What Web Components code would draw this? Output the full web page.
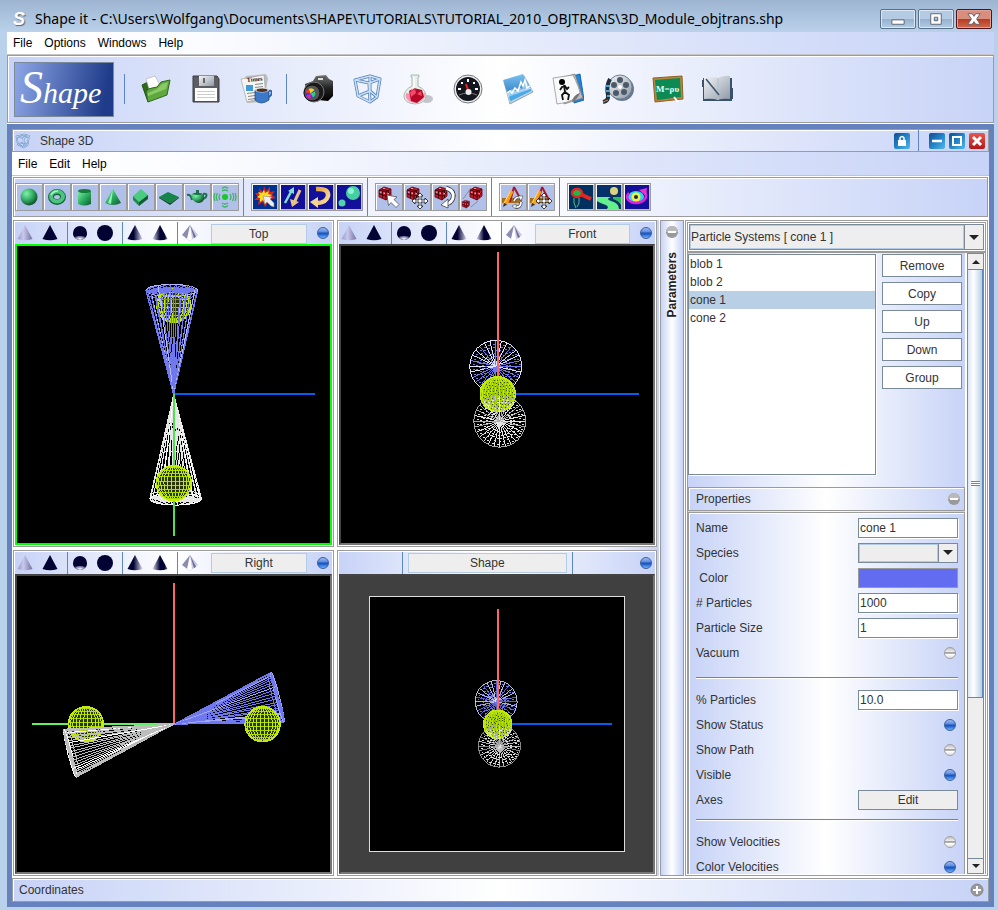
<!DOCTYPE html>
<html lang="en">
<head>
<meta charset="utf-8">
<title>Shape it</title>
<style>
  html, body { height: 100%; margin: 0; }
  body {
    --line: #9b9b9b;
    --edge: #c7d3f7;
    --steel: #7a8a99;
    --blue: #6581be;
    --sheen: linear-gradient(90deg, #c7d3f7, #fff 50%, #c7d3f7);
    --fade: linear-gradient(90deg, #fff, #fbfcff 20%, #c7d3f7);
    font: 12px/16px "Liberation Sans", Arial, sans-serif;
    color: #333;
    background: #b9d1ea;
  }
</style>
</head>
<body>
<app-window></app-window>

<script>
// -Small helper: every element clones its own template into an open root
function define(name, html, setup) {
  const template = document.createElement('template');
  template.innerHTML = html;
  customElements.define(name, class extends HTMLElement {
    constructor() {
      super();
      this.attachShadow({ mode: 'open' });
      this.shadowRoot.appendChild(template.content.cloneNode(true));
    }
    connectedCallback() {
      if (setup && !this.ready) setup(this, this.shadowRoot);
      this.ready = true;
    }
  });
}

const DEFS = `
  <linearGradient id="green" x2="1" y2="1"><stop stop-color="#7df0a5"/><stop offset=".5" stop-color="#2fae62"/><stop offset="1" stop-color="#0c5a2c"/></linearGradient>
  <radialGradient id="ball" cx=".35" cy=".3" r=".75"><stop stop-color="#7ff2a8"/><stop offset=".5" stop-color="#35b067"/><stop offset="1" stop-color="#0c4a26"/></radialGradient>
  <linearGradient id="metal" y2="1" x2="1"><stop stop-color="#f4f6f8"/><stop offset="1" stop-color="#8e99a6"/></linearGradient>
  <linearGradient id="dark" x2="0" y2="1"><stop stop-color="#777"/><stop offset=".5" stop-color="#222"/><stop offset="1" stop-color="#000"/></linearGradient>
  <linearGradient id="sky" x2="0" y2="1"><stop stop-color="#7cc0ee"/><stop offset="1" stop-color="#1c6fc0"/></linearGradient>
  <linearGradient id="gold" x2="1" y2="1"><stop stop-color="#e2a23c"/><stop offset="1" stop-color="#fbe0a0"/></linearGradient>`;

const CUBE = `<path fill="#c31828" stroke="#5a0610" stroke-width=".8" d="M2 5l5-3 7 2v7l-5 4-7-3z"/><path fill="none" stroke="#46040c" d="M2 5l7 2 5-3M9 7v8M2 8.500l7 3 5-4M4.500 4l7 2v7M5.500 6v7"/><path fill="#ec98a0" d="M3 6.500h1.500v1.500H3zM6.500 7.500H8V9H6.500zM10.500 8H12v1.500h-1.500zM6 3h2v1H6z"/>`;
const POINTER = `<path fill="#fff" stroke="#444" stroke-width=".7" d="M10 10l10 2-3 2.500 5 5-3 3-5-5-2.500 3z"/>`;
const CROSS = `<path fill="#fff" stroke="#111" stroke-width=".8" d="M15 8l3 3h-2v4h4v-2l3 3-3 3v-2h-4v4h2l-3 3-3-3h2v-4h-4v2l-3-3 3-3v2h4v-4h-2z"/>`;
const TOOLS = `<path fill="#a96d20" d="M1 13h20v5H1z"/><path d="M13 2l-4 15M13 2l7 13" stroke="#a8182c" stroke-width="2"/><path d="M11 6L4 20" stroke="#f6a11b" stroke-width="3.500"/><path d="M9.500 6L3 18" stroke="#ffe07a"/><path fill="#333" d="M2 22l1-4 3 1.500z"/>`;

// -Drawn on a 32px box (main bar), 24px box (object bar) or 16px box (views)
const ICONS = {
  open: [32, `<path fill="#2d6a1c" stroke="#25551a" d="M2 12l6-3 2 2 5-2v5l-7 15z"/><path fill="#fff" stroke="#aaa" stroke-width=".6" d="M6 6l9-3 5 9-10 7z"/><path fill="#5fa83e" stroke="#2d6a1c" d="M6 19q2-4 6-4l5-1 4-5 9-2-3 15-19 7z"/><path fill="#a6df80" opacity=".6" d="M8 20l9-4 5-5 6-2-2 7-18 7z"/>`],
  save: [32, `<path fill="#5d5d62" stroke="#3d3d42" d="M3 3h24l2 3v23H3z"/><path fill="url(#metal)" d="M9 3h15v10H9z"/><path fill="#666" d="M13 5h2v5h-2z"/><path fill="#fff" d="M5 15h22v13H5z"/><path stroke="#ccc" d="M7 18.500h18M7 21.500h18M7 24.500h18"/>`],
  news: [32, `<path fill="#bdbdbd" d="M3 8l3-5 20-2 2 4-4 24-17 1z"/><path fill="#f5f5f5" stroke="#999" stroke-width=".6" d="M1 6l23-4 2 22-19 5z"/><text x="7" y="9" font-family="Liberation Serif" font-weight="bold" font-size="6" fill="#111" transform="rotate(-6 8 8)">Times</text><path fill="#3f9ad5" d="M6 12h7v6H6z"/><path stroke="#888" d="M15 11.500l8-1M15 14.500l8-1M7 20.500l8-1M8 23.500l7-1M8 26.500l7-1"/><path fill="#3c78c8" stroke="#173e7d" stroke-width=".7" d="M15 17v10q6 6 14 0V17z"/><path fill="none" stroke="#2e66b4" stroke-width="2" d="M29 18q4-1 2 4l-3 3"/><ellipse cx="22" cy="17" rx="7" ry="2.500" fill="#ddd"/><ellipse cx="22" cy="17.300" rx="5.500" ry="1.700" fill="#51301a"/>`],
  camera: [32, `<path fill="url(#dark)" d="M3 11l8-3 3-5 10-1 3 4 4 2v15l-5 5-20-2z"/><path fill="#555" d="M15 4h8l2 4H13z"/><path fill="#ddd" d="M16 5h5v2h-5z"/><circle cx="12" cy="19" r="10" fill="#1b1b1b" stroke="#777"/><circle cx="10" cy="20" r="8" fill="#555" stroke="#111"/><circle cx="8.500" cy="20.500" r="5" fill="#3a3ad8"/><path fill="#e11cb8" d="M8.500 20.500L4 23a5 5 0 0 0 5 2.500z"/><path fill="#27d07a" d="M8.500 20.500l4.500-2a5 5 0 0 1-2 6z"/><path fill="#f3d21c" d="M8.500 20.500L6.500 16a5 5 0 0 1 6 1z"/><path fill="#e63c2d" d="M8.500 20.500l-5-1a5 5 0 0 1 3-3.500z"/>`],
  cube: [32, `<g fill="none" stroke="#5580b5" stroke-width="3" stroke-linejoin="round"><path d="M3 7l15-4 10 3-3 18-7 5-12-6z"/><path d="M3 7l14 3 11-4M17 10l1 19M18 3v15L6 23M18 18l7 6"/></g><g fill="none" stroke="#c9e0f8" stroke-width="1.500" stroke-linejoin="round"><path d="M3 7l15-4 10 3-3 18-7 5-12-6z"/><path d="M3 7l14 3 11-4M17 10l1 19M18 3v15L6 23M18 18l7 6"/></g>`],
  flask: [32, `<ellipse cx="25" cy="26" rx="6" ry="4" fill="#777" opacity=".4"/><path fill="#e5efeb" stroke="#a9bab2" d="M9 2h8v2h-1v9q8 4 8 10 0 7-11 8Q2 30 2 23q0-6 8-10V4H9z"/><path fill="#ff8fae" d="M4 20q9 2 19 0 1 8-10 10Q2 28 4 20z"/><path fill="#b80828" d="M7 18l5-3 8 2 2 7-7 6-6-2z"/><path fill="#f24e6c" d="M8 19l5-3 1 4-5 4zM15 21l4-3 1 5z"/><path fill="#fff" opacity=".7" d="M11 4h2v11l-4 3q2-3 2-5z"/>`],
  gauge: [32, `<circle cx="16" cy="16" r="14" fill="#eee" stroke="#777"/><circle cx="16" cy="16" r="12" fill="#14161f"/><path fill="#fff" d="M15 6h2v3h-2zM6 15h3v2H6zM23 15h3v2h-3zM9 9h2v2H9zM21 9h2v2h-2z"/><path fill="none" stroke="#777" d="M7 22q9-4 18 0"/><path d="M14 11l3 9" stroke="#e3281e" stroke-width="2"/><circle cx="16.500" cy="19" r="3" fill="#eee"/>`],
  wave: [32, `<path fill="#b9c8d4" stroke="#778ea1" stroke-width=".7" d="M2 9l20-6 9 16-23 12z"/><path fill="url(#sky)" d="M1 7l20-6 9 16-22 10z"/><path fill="#4aa8e6" stroke="#d7efff" stroke-width=".6" d="M6 21l23-6 1 3-22 11z"/><path fill="#d8f0ff" opacity=".5" d="M5 19l5-3 3 2 4-4 3 2 4-8 4 6 1 2-23 8z"/><path fill="none" stroke="#fff" stroke-width="1.500" d="M5 20l3-2 2 2 3-5 3 3 3-9 2 4 2-6 2 8 3-2"/>`],
  runner: [32, `<path fill="#2185dd" stroke="#1665b5" d="M21 3l7-2 4 26-10 3z"/><path fill="#bbb" stroke="#777" stroke-width=".7" d="M8 5l15-4 8 24-19 6z"/><path fill="#f9f9f9" stroke="#888" stroke-width=".7" d="M1 5l20-3q6 12 7 18-5 9-23 11z"/><circle cx="10" cy="9" r="3"/><path fill="none" stroke="#111" stroke-width="1.800" d="M12 12l1 7 4 3-1 5M13 19l-3 3 1 5M8 17l2-3 3-1 2 3 2-2"/><path fill="#777" d="M28 20q-7 2-8 9 5-2 8-9z"/>`],
  reel: [32, `<circle cx="20" cy="16" r="12" fill="#68798f"/><circle cx="18" cy="14" r="12" fill="url(#metal)" stroke="#6f7f92"/><g fill="#4b5968"><circle cx="18" cy="7" r="3"/><circle cx="24" cy="12" r="3"/><circle cx="22" cy="19" r="3"/><circle cx="14" cy="20" r="3"/><circle cx="12" cy="12" r="3"/></g><circle cx="18" cy="14" r="2" fill="#fff"/><path fill="none" stroke="#222e3b" stroke-width="4" d="M8 6Q4 13 6 22q1 6-5 7"/><path stroke="#4aa9e0" stroke-width="2" d="M4 13h4M4 18h4M5 23h3"/><path stroke="#e08a4a" d="M1 29l5-2"/>`],
  board: [32, `<path fill="#b8863b" stroke="#8f6224" d="M1 5l29-2 1 23-28 3z"/><path fill="#0b8a55" d="M3 7l25-2 1 19-24 3z"/><text x="4" y="19" font-family="Liberation Serif" font-size="9" font-weight="bold" fill="#e8fff2">M=ρυ</text><path d="M22 24l4 5" stroke="#fff" stroke-width="2"/>`],
  book: [32, `<path fill="#39516b" d="M1 5h29v23H1zM0 7h3v7H0zM28 15h3v11h-3z"/><path fill="url(#metal)" d="M2 4q9-1 14 1 6-3 12-2v23q-7-1-12 1-6-2-14-1z"/><path stroke="#b4c0cc" d="M16 5v22"/><path d="M4 6l13 16" stroke="#3d5470" stroke-width="1.500"/>`],

  sphere: [24, `<circle cx="12" cy="12" r="8.500" fill="url(#ball)"/>`],
  torus: [24, `<ellipse cx="12" cy="12" rx="6" ry="5" fill="none" stroke="#16643a" stroke-width="6"/><ellipse cx="12" cy="11.500" rx="6" ry="5" fill="none" stroke="#4cc47e" stroke-width="4"/><path d="M6 10q2-4 7-4" fill="none" stroke="#a5f5c4" stroke-width="1.500"/>`],
  cylinder: [24, `<path fill="url(#green)" d="M5 6v13q6 3 13 0V6z"/><ellipse cx="11.500" cy="6" rx="6.500" ry="2" fill="#177b3e"/>`],
  cone: [24, `<path fill="url(#green)" d="M12 4l8 14q-8 4-16 0z"/><path fill="#8ff5b5" d="M12 4L7 18l3 1z"/>`],
  box: [24, `<path fill="#49cc80" d="M4 11l8-7 7 6-9 7z"/><path fill="#22894c" d="M4 11l6 6v4l-6-6z"/><path fill="#0f5e31" d="M10 17l9-7v4l-9 7z"/>`],
  plane: [24, `<path fill="#15854a" d="M2 12l9-5 11 5-9 6z"/><path fill="#0b5129" d="M2 12l11 6 9-6v1l-9 7-11-7z"/>`],
  teapot: [24, `<path fill="none" stroke="#1f7048" stroke-width="2" d="M2 10q4-1 5 5M18 9q5-1 3 3l-4 3"/><path fill="url(#ball)" d="M6 10q6-5 13 0 1 7-5 8-6 0-8-8z"/><path fill="#1f7048" d="M11 5h3v3h-3zM7 9q5-3 11 0-5 2-11 0z"/>`],
  signal: [24, `<circle cx="12" cy="12" r="3" fill="#16c82c"/><g fill="none" stroke="#3fb366" stroke-width="1.300"><path d="M7 9q-2 3 0 6M4.500 8q-2.500 4 0 8M2 8q-2 4 0 8M17 9q2 3 0 6M19.500 8q2.500 4 0 8M22 8q2 4 0 8M9 6q3-2 6 0M9 3.500q3-3 6 0M9 18q3 2 6 0M9 20.500q3 3 6 0"/></g>`],
  pick: [24, `<path fill="#003090" d="M0 0h24v24H0z"/><path fill="#e32118" d="M11 1l2 5 4-4v5l5-1-3 4 4 3-5 1 2 5-5-2-3 5-2-5-5 3 1-5-5 0 4-3-3-4 5 0-1-5 4 4z"/><path fill="#ffdf23" d="M11 5l1 3 4-2-1 3 4 1-3 2 2 4-4-1-2 4-2-4-3 2 0-4-3-1 3-2-2-3 4 1z"/><path fill="#eee" stroke="#888" stroke-width=".6" d="M10 11l9 1-2 2 4 4 0 4-3-1-4-4-2 2z"/>`],
  move: [24, `<path fill="#12109a" d="M0 0h24v24H0z"/><path stroke="#7fe0cf" stroke-width="2.500" d="M4 18L11 5"/><path fill="#7fe0cf" d="M13 2v7l-6-3z"/><path stroke="#e6c488" stroke-width="3" d="M19 5l-6 13"/><path fill="#e6c488" d="M9 14l9 3-7 5z"/>`],
  rotate: [24, `<path fill="#12109a" d="M0 0h24v24H0z"/><path fill="none" stroke="url(#gold)" stroke-width="4.500" d="M7 4q13-1 12 7-2 7-11 7"/><path fill="#f6d78e" d="M9 12v11l-8-6z"/>`],
  scale: [24, `<path fill="#12109a" d="M0 0h24v24H0z"/><circle cx="16" cy="8" r="7" fill="#46cfa0"/><circle cx="14" cy="6" r="3" fill="#8ff3d0"/><circle cx="5" cy="18" r="3.500" fill="#4fd3a7"/>`],
  opick: [24, CUBE + POINTER],
  omove: [24, CUBE + CROSS],
  orot: [24, CUBE + `<path fill="none" stroke="#333" stroke-width="4.500" d="M13 3q9 3 7 10-1 4-6 6"/><path fill="none" stroke="#fff" stroke-width="3" d="M13 3q9 3 7 10-1 4-6 6"/><path fill="#fff" stroke="#333" stroke-width=".7" d="M15 14v9l-7-3z"/>`],
  oscale: [24, `<g transform="translate(7 0)">${CUBE}</g><g transform="translate(0 14) scale(.6)">${CUBE}</g><path stroke="#777" stroke-width=".7" d="M2 14L10 3M10 22l7-6"/>`],
  trot: [24, TOOLS + `<path fill="none" stroke="#333" stroke-width="3" d="M13 16q2-5 6-3M20 17q0 6-6 5"/><path fill="none" stroke="#fff" stroke-width="1.800" d="M13 16q2-5 6-3M20 17q0 6-6 5"/><path fill="#fff" stroke="#333" stroke-width=".5" d="M17 11h5l-2 5zM15 19v5l-4-3z"/>`],
  tmove: [24, TOOLS + CROSS],
  zoom: [24, `<path fill="#003060" d="M0 0h24v24H0z"/><path d="M11 9l11 5" stroke="#e32720" stroke-width="4"/><ellipse cx="8" cy="8" rx="5" ry="4" fill="#20b84c" stroke="#e32720" stroke-width="2.500"/><path d="M5 13v5l2 5M10 13v5l-2 4" stroke="#6fe08a" fill="none" stroke-width=".8"/>`],
  scene: [24, `<path fill="#06306c" d="M0 0h24v24H0z"/><circle cx="17" cy="6" r="4" fill="#dcd27c"/><path fill="#64f08c" d="M0 12h14q-6 2 0 4 8 2 8 8H10q3-3-4-5-5-2-6-3z"/><path fill="#2dbd58" d="M16 12h8v8q-2-4-8-6z"/>`],
  eye: [24, `<path fill="#12109a" d="M0 0h24v24H0z"/><ellipse cx="11" cy="12" rx="8" ry="6" fill="#28d8f0"/><circle cx="11" cy="12" r="4.500" fill="#f6f13a"/><circle cx="11" cy="12" r="2" fill="#225"/><path fill="none" stroke="#e21ee2" stroke-width="2.500" d="M4 8q-5 5 2 9 8 3 14-3 2-3 0-7"/><path fill="#ee30c8" d="M14 5l8-2-1 8z"/>`],

  coneLight: [16, `<defs><linearGradient id="a"><stop stop-color="#9a98cf"/><stop offset=".4" stop-color="#c9c8ea"/><stop offset="1" stop-color="#74729f"/></linearGradient></defs><path fill="url(#a)" d="M8 0l7.500 14q-7.500 2.500-15 0z"/>`],
  coneDark: [16, `<path fill="#020233" d="M8 0l7.500 14q-7.500 2.500-15 0z"/>`],
  ballHalf: [16, `<defs><radialGradient id="a" cy=".85"><stop stop-color="#fff"/><stop offset=".7" stop-color="#77759f"/><stop offset="1" stop-color="#020233"/></radialGradient></defs><circle cx="8" cy="8" r="7" fill="#020233"/><path fill="url(#a)" d="M1 8h14q-1 7-7 7T1 8z"/>`],
  ballDark: [16, `<circle cx="8" cy="8" r="8" fill="#020233"/>`],
  coneRight: [16, `<defs><linearGradient id="a"><stop offset=".4" stop-color="#020233"/><stop offset="1" stop-color="#d5d4ea"/></linearGradient></defs><path fill="url(#a)" d="M8 0l7.500 14q-7.500 2.500-15 0z"/>`],
  coneLeft: [16, `<defs><linearGradient id="a"><stop stop-color="#d5d4ea"/><stop offset=".5" stop-color="#020233"/><stop offset=".8" stop-color="#020233"/><stop offset="1" stop-color="#77759f"/></linearGradient></defs><path fill="url(#a)" d="M8 0l7.500 14q-7.500 2.500-15 0z"/>`],
  diamond: [16, `<path fill="#8c8bb0" d="M8 0L0 10l8 6z"/><path fill="#c8c8e2" d="M8 0l8 10-8 6z"/><path fill="#fff" d="M8 0L5 14l3 2 2-2z"/><path fill="#6c6b96" d="M8 0l4 13 2-1z"/>`],

  plus: [16, `<circle cx="8" cy="8" r="6" fill="#999" stroke="#888"/><path d="M8 4v8M4 8h8" stroke="#fff" stroke-width="2"/>`],
  minus: [16, `<circle cx="8" cy="8" r="6" fill="#999"/><path fill="#b9b9b9" d="M2 8a6 6 0 0 1 12 0z"/><path d="M4 8h8" stroke="#fff" stroke-width="2"/>`],
  lock: [16, `<path fill="#fff" d="M4 7h8v6H4z"/><path d="M6 7V5q2-3 4 0v2" fill="none" stroke="#fff" stroke-width="1.500"/>`],
  min: [16, `<path d="M3 8h10" stroke="#fff" stroke-width="2.500"/>`],
  max: [16, `<path d="M4 4h8v8H4z" fill="none" stroke="#fff" stroke-width="2"/>`],
  close: [16, `<path d="M4 4l8 8M12 4l-8 8" stroke="#fff" stroke-width="3"/>`],
  winMin: [16, `<path d="M1 9h14v5H1z" fill="#fff" stroke="#555a66"/>`],
  winMax: [16, `<path d="M2 2h12v12H2zM6 6v4h4V6z" fill="#fff" fill-rule="evenodd" stroke="#555a66"/>`],
  winClose: [16, `<path d="M1 2h5l2 3 2-3h5l-4 6 4 6h-5l-2-3-2 3H1l4-6z" fill="#fff" stroke="#555a66"/>`]
};

define('shape-icon', `
  <style>
    :host { display: block; line-height: 0; }
    svg { width: 100%; height: 100%; display: block; }
  </style>`, (host, root) => {
  const [size, body] = ICONS[host.getAttribute('name')];
  root.innerHTML += `<svg viewBox="0 0 ${size} ${size}" aria-hidden="true"><defs>${DEFS}</defs>${body}</svg>`;
});

// -kind: main | tool | view | frame | win
define('icon-button', `
  <style>
    :host { display: block; flex: none; }
    button { display: block; box-sizing: border-box; margin: 0; padding: 0; border: 0; background: none; }
    shape-icon { width: 16px; height: 16px; margin: auto; }
    .main shape-icon { width: 32px; height: 32px; }
    .tool { width: 28px; height: 28px; padding: 1px; border: 1px solid var(--line); box-shadow: inset 1px 1px #fff; background: #b1c0e8; }
    .tool shape-icon { width: 24px; height: 24px; }
    .frame { width: 16px; height: 16px; border-radius: 2px; background: linear-gradient(135deg, #0e4c92, #2383c8 50%, #53b8ec); }
    .frame.red { background: linear-gradient(#e8584f, #b01818); }
    .win { width: 36px; height: 20px; border: 1px solid #5a6f88; border-radius: 2px; box-shadow: inset 0 0 0 1px #dbe7f5; background: linear-gradient(#b5cbe3 50%, #95b0cd 50%, #b4cde6); }
    .win.red { border-color: #4c1420; box-shadow: inset 0 0 0 1px #e3a196; background: linear-gradient(#d98d7c 50%, #b73a22 50%, #cf6a4c); }
    .win shape-icon { width: 14px; height: 14px; }
  </style>
  <button type="button"></button>`, (host, root) => {
  const button = root.querySelector('button');
  button.className = host.getAttribute('kind');
  button.setAttribute('aria-label', host.getAttribute('name'));
  button.innerHTML = `<shape-icon name="${host.getAttribute('name')}"></shape-icon>`;
});

const icons = (kind, names) => names.split(' ').map(n =>
  n === '|' ? '<i class="sep"></i>' : `<icon-button kind="${kind}" name="${n}"></icon-button>`).join('');

define('menu-bar', `
  <style>
    :host { display: flex; align-items: center; gap: 12px; height: 23px; padding: 0 6px; color: #000; background: var(--fade); border-bottom: 1px solid #c4c4c4; }
    ::slotted(button) { font: inherit; color: inherit; border: 0; padding: 0; background: none; }
  </style>
  <slot></slot>`);

// -Round lamp that is a tick box underneath
const LAMP = `
    input.lamp {
      appearance: none; flex: none; box-sizing: border-box; width: 12px; height: 12px; margin: 0; border-radius: 50%;
      border: 1px solid #a0a0a0; background: linear-gradient(#c4c4c4, #efefef 40%, #a4a4a4 45%, #b4b4b4 55%, #fff 65%, #ddd);
    }
    input.lamp:checked { border-color: #3b5f9c; background: linear-gradient(#9dbdf0, #5b8be0 40%, #1c4fb4 50%, #2766d0 65%, #6fb5ff); }`;

// ---- Wire scenes ----
const line = (x1, y1, x2, y2, c, w = 1) =>
  `<path d="M${x1.toFixed(1)} ${y1.toFixed(1)}L${x2.toFixed(1)} ${y2.toFixed(1)}" stroke="${c}" stroke-width="${w}"/>`;

// -Cone from the origin to a tilted base ellipse
function coneWire(cx, cy, rx, ry, tilt, dim, lit) {
  let out = '';
  const rings = [1, 0.97, 0.52, 0.28];
  const at = (a, s) => {
    const x = rx * Math.cos(a), y = ry * Math.sin(a);
    return [(cx + x * Math.cos(tilt) - y * Math.sin(tilt)) * s, (cy + x * Math.sin(tilt) + y * Math.cos(tilt)) * s];
  };
  for (let i = 0; i < 26; i++) {
    const a = i * Math.PI / 13 + 0.05;
    const p = at(a, 1);
    out += line(0, 0, p[0], p[1], i % 7 === 3 ? lit : dim);
    out += line(cx, cy, p[0], p[1], dim);
    rings.forEach(s => {
      const m = at(a, s), n = at(a + 0.24, s);
      if (s > 0.9 || i % 2) out += line(m[0], m[1], n[0], n[1], s === 1 ? lit : dim);
    });
  }
  return out;
}

// -Cone seen along its axis
function wheelWire(cx, cy, r, rim, dot) {
  let out = '';
  for (let i = 0; i < 28; i++) {
    const a = i * Math.PI / 14, c = Math.cos(a), s = Math.sin(a);
    out += line(cx, cy, cx + r * c, cy + r * s, s > 0.3 || i % 3 === 0 ? dot : rim);
    for (let k = 0; k < 5; k++) {
      const d = r * (0.4 + 0.12 * k), b = a + 0.06 * (k % 3 + 1);
      out += `<rect x="${(cx + d * Math.cos(b)).toFixed(1)}" y="${(cy + d * Math.sin(b)).toFixed(1)}" width="2" height="1" fill="${dot}" stroke="none"/>`;
    }
  }
  return out + `<circle cx="${cx}" cy="${cy}" r="${r}" stroke="${rim}"/>`;
}

function ballWire(cx, cy, r, dense) {
  const n = 13;
  let out = `<circle cx="${cx}" cy="${cy}" r="${r}" fill="${dense ? '#96c400' : '#2a3600'}" stroke="#c4f000" stroke-width="1.500"/>`;
  for (let i = 1; i < n; i++) {
    const a = Math.PI * i / n - Math.PI / 2, d = r * Math.sin(a), w = r * Math.cos(a);
    out += line(cx - w, cy + d, cx + w, cy + d, '#a8d800');
    if (d > 0) out += `<ellipse cx="${cx}" cy="${cy}" rx="${d.toFixed(1)}" ry="${r}" stroke="#c2ea10"/>`;
  }
  if (dense) {
    for (let i = 0; i < 90; i++) {
      const a = i * 2.4, d = r * 0.9 * Math.sqrt(i / 90);
      out += `<rect x="${(cx + d * Math.cos(a)).toFixed(0)}" y="${(cy + d * Math.sin(a)).toFixed(0)}" width="1" height="1" fill="#3c5200" stroke="none"/>`;
    }
  }
  return out;
}

const BLUE = '#7078ee', RED = '#ff6464', GREEN = '#64f064', AXIS = '#0a5cf0';
const front = `
  ${line(0, 0, 141, 0, AXIS, 2)}
  ${wheelWire(-2, -28, 26, '#dfe2ff', BLUE)}
  ${line(0, -142, 0, 0, RED, 2)}
  ${ballWire(0, 0, 17.5, true)}
  ${wheelWire(2, 27, 26, '#aaa', '#e4e4e4')}`;
const SCENES = {
  top: `${line(0, 0, 141, 0, AXIS, 2)}${ballWire(0, -89, 17)}${coneWire(-2, -104, 26, 6, 0, BLUE, '#b4b8ff')}
    ${coneWire(2, 105, 26, 6, 0, '#e6e6e6', '#fff')}${line(0, 0, 0, 142, '#50e050', 2)}${ballWire(0, 89, 17.5)}`,
  front,
  right: `${line(0, 0, 0, -141, RED, 2)}${line(0, 0, -142, 0, GREEN, 2)}${ballWire(-88, 0, 17.5)}
    ${coneWire(104, -27, 2, 26, -0.25, BLUE, '#a0a8ff')}${coneWire(-104, 29, 2, 25, -0.25, '#bdbdbd', '#fff')}${ballWire(89, 0, 17.5)}`,
  shape: `<rect x="-128" y="-128" width="255" height="255" fill="#000" stroke="#ddd"/><g transform="scale(.81)">${front}</g>`
};

define('wire-scene', `
  <style>
    :host { display: block; min-height: 0; overflow: hidden; background: #000; border: 2px solid #444; border-right-color: #777; border-bottom-color: #777; }
    :host([active]) { border-color: #0f0; }
    :host([view=shape]) { background: #404040; }
    svg { display: block; width: 100%; height: 100%; }
  </style>`, (host, root) => {
  root.innerHTML += `<svg viewBox="-157 -148 313 296" fill="none" shape-rendering="crispEdges" aria-hidden="true">${SCENES[host.getAttribute('view')]}</svg>`;
});

define('view-panel', `
  <style>
    :host { display: flex; flex-direction: column; min-height: 0; box-sizing: border-box; padding: 1px; border: 1px solid var(--line); background: #fff; }
    header { display: flex; align-items: center; height: 22px; flex: none; background: var(--sheen); }
    .group { display: flex; align-items: center; align-self: stretch; gap: 9px; padding: 0 8px 0 4px; margin-left: 1px; }
    .group + .group { border-left: 1px solid #5f86c4; }
    .group:first-child { padding-left: 1px; }
    .title { font: inherit; color: inherit; flex: 1; height: 20px; padding: 0; margin: 1px 10px 0 5px; border: 1px solid #b3cce4; background: #eee; }
    .wide { align-self: stretch; flex: 1; display: flex; align-items: center; border: solid #5f86c4; border-width: 0 1px; margin: 0 67px 0 63px; }
    .wide .title { margin: 1px 5px 0; }
    ${LAMP}
    .lamp { margin-right: 3px !important; }
    wire-scene { flex: 1; }
  </style>
  <header></header>`, (host, root) => {
  const view = host.getAttribute('view');
  const title = `<button type="button" class="title">${host.getAttribute('label')}</button>`;
  const header = root.querySelector('header');
  header.innerHTML = (view === 'shape'
    ? `<div class="wide">${title}</div>`
    : `<div class="group">${icons('view', 'coneLight coneDark')}</div>
       <div class="group">${icons('view', 'ballHalf ballDark')}</div>
       <div class="group">${icons('view', 'coneRight coneLeft')}</div>
       <div class="group">${icons('view', 'diamond')}</div>${title}`) +
    `<input class="lamp" type="checkbox" checked aria-label="Show view">`;
  const active = host.hasAttribute('active') ? 'active' : '';
  root.appendChild(document.createRange().createContextualFragment(`<wire-scene view="${view}" ${active}></wire-scene>`));
});

// ---- Parameter column ----
define('combo-box', `
  <style>
    :host { display: flex; box-sizing: border-box; height: 26px; border: 1px solid var(--steel); background: #eee; }
    select { appearance: none; flex: 1; min-width: 0; font: inherit; color: inherit; margin: 0; padding: 0; border: 1px solid #b3cce4; background: #eee; border-radius: 0; }
    span { flex: none; width: 18px; display: grid; place-items: center; border-left: 1px solid var(--steel); }
    span::after { content: ''; border: solid transparent; border-width: 5px 5px 0; border-top-color: #222; }
  </style>
  <select><option></option></select><span></span>`, (host, root) => {
  root.querySelector('option').textContent = host.getAttribute('value');
  root.querySelector('select').setAttribute('aria-label', host.getAttribute('label'));
});

define('field-row', `
  <style>
    :host { display: flex; align-items: center; justify-content: space-between; height: 25px; }
    .box { box-sizing: border-box; width: 100px; height: 20px; margin: 0; font: inherit; color: inherit; border-radius: 0; border: 1px solid var(--steel); }
    input.text { padding: 0 1px; background: #fff; box-shadow: 1px 1px #fff; }
    button.box { padding: 0; background: #eee; }
    button.swatch { background: #626cf0; border-color: #999; }
    combo-box { width: 100px; height: 20px; }
    ${LAMP}
    .lamp { margin-right: 2px !important; }
  </style>
  <label for="field"><slot></slot></label>`, (host, root) => {
  const value = host.getAttribute('value') || '';
  const controls = {
    text: `<input class="box text" id="field" type="text" value="${value}">`,
    combo: `<combo-box label="Species" value=""></combo-box>`,
    color: `<button class="box swatch" id="field" type="button" aria-label="Color"></button>`,
    on: `<input class="lamp" id="field" type="checkbox" checked>`,
    off: `<input class="lamp" id="field" type="checkbox">`,
    button: `<button class="box" id="field" type="button">${value}</button>`
  };
  root.appendChild(document.createRange().createContextualFragment(controls[host.getAttribute('type')]));
});

define('property-list', `
  <style>
    :host { display: flex; flex-direction: column; flex: 1; min-height: 0; }
    header { display: flex; align-items: center; justify-content: space-between; flex: none; height: 22px; padding: 0 2px 0 7px; border: 1px solid var(--line); box-shadow: inset 1px 1px #fff; background: var(--sheen); }
    .rows { flex: 1; min-height: 0; overflow: hidden; margin-top: 1px; padding: 2px 6px 0 7px; border: 1px solid var(--line); border-bottom: 0; box-shadow: inset 1px 1px #fff; background: var(--sheen); }
    hr { margin: 12px 0 8px; border: 0; border-top: 1px solid #5f86c4; border-bottom: 1px solid #fff; }
    hr.near { margin-top: 7px; }
  </style>
  <header><span>Properties</span><icon-button kind="view" name="minus"></icon-button></header>
  <div class="rows">
    <field-row type="text" value="cone 1">Name</field-row>
    <field-row type="combo">Species</field-row>
    <field-row type="color">&nbsp;Color</field-row>
    <field-row type="text" value="1000"># Particles</field-row>
    <field-row type="text" value="1">Particle Size</field-row>
    <field-row type="off">Vacuum</field-row>
    <hr>
    <field-row type="text" value="10.0">% Particles</field-row>
    <field-row type="on">Show Status</field-row>
    <field-row type="off">Show Path</field-row>
    <field-row type="on">Visible</field-row>
    <field-row type="button" value="Edit">Axes</field-row>
    <hr class="near">
    <field-row type="off">Show Velocities</field-row>
    <field-row type="on">Color Velocities</field-row>
  </div>`);

define('scroll-rail', `
  <style>
    :host { display: flex; flex-direction: column; box-sizing: border-box; width: 17px; border: 1px solid var(--steel); background: #eee; }
    button { flex: none; display: grid; place-items: center; height: 15px; padding: 0; border: 0; background: #eee; }
    button::after { content: ''; border: solid transparent; border-width: 0 4px 4px; border-bottom-color: #222; }
    button.down { border-top: 1px solid var(--steel); }
    button.down::after { border-width: 4px 4px 0; border-top-color: #222; }
    .thumb { flex: 427; display: grid; place-items: center; border: 1px solid #5f86c4; border-left: 0; background: linear-gradient(90deg, #dbe7f4, #fff 40%, #b8cfe5); }
    .thumb::after { content: ''; width: 9px; height: 5px; background: repeating-linear-gradient(#5f86c4 0 1px, #fff 1px 2px); }
    .track { flex: 160; }
  </style>
  <button type="button" class="up" aria-label="Scroll up"></button>
  <div class="thumb"></div><div class="track"></div>
  <button type="button" class="down" aria-label="Scroll down"></button>`);

define('side-panel', `
  <style>
    :host { display: flex; flex-direction: column; min-height: 0; box-sizing: border-box; padding: 1px 1px 1px; border: 1px solid var(--line); background: #fff; }
    .pick, .pane { border: 1px solid var(--line); padding: 1px; }
    .pane { flex: 1; min-height: 0; display: flex; gap: 2px; background: #fff; border-bottom: 0; padding: 0 1px 0 0; }
    .main { flex: 1; min-width: 0; display: flex; flex-direction: column; gap: 12px; background: var(--sheen); padding: 1px 0 0; }
    .upper { display: flex; gap: 6px; padding-right: 3px; }
    ul { flex: 1; height: 219px; margin: 0; padding: 0; list-style: none; background: #fff; border: 1px solid var(--steel); box-shadow: 1px 1px #fff; }
    li { padding: 1px; }
    li[aria-selected=true] { background: #b8cfe5; }
    .buttons { display: flex; flex-direction: column; gap: 5px; width: 80px; }
    .buttons button { height: 23px; padding: 0; font: inherit; color: inherit; border: 1px solid var(--steel); background: #fff; }
    scroll-rail { flex: none; }
  </style>
  <div class="pick"><combo-box label="Object" value="Particle Systems [ cone 1 ]"></combo-box></div>
  <div class="pane">
    <div class="main">
      <div class="upper">
        <ul role="listbox" aria-label="Objects">
          <li role="option">blob 1</li>
          <li role="option">blob 2</li>
          <li role="option" aria-selected="true">cone 1</li>
          <li role="option">cone 2</li>
        </ul>
        <div class="buttons">
          <button type="button">Remove</button>
          <button type="button">Copy</button>
          <button type="button">Up</button>
          <button type="button">Down</button>
          <button type="button">Group</button>
        </div>
      </div>
      <property-list></property-list>
    </div>
    <scroll-rail></scroll-rail>
  </div>`);

define('module-frame', `
  <style>
    :host { display: flex; flex-direction: column; flex: 1; min-height: 0; background: #fff; }
    header { display: flex; align-items: center; gap: 4px; height: 21px; flex: none; padding: 0 3px 0 2px; border: 1px solid var(--line); box-shadow: inset 1px 1px #fff; background: var(--sheen); }
    header span { flex: 1; padding-left: 5px; }
    header shape-icon { width: 16px; height: 16px; }
    header .sep { width: 1px; align-self: stretch; background: #5f86c4; margin: 0 6px 0 4px; }
    menu-bar { flex: none; }
    .tools { display: flex; flex: none; align-items: center; height: 38px; margin: 1px 1px 3px; padding: 0 1px; border: 1px solid var(--line); box-shadow: inset 1px 1px #fff; background: var(--sheen); }
    .tools .sep { width: 1px; align-self: stretch; background: #5f86c4; margin: 0 7px 0 4px; }
    .body { flex: 1; min-height: 0; display: grid; grid-template-columns: 1fr 24px 303px; grid-template-rows: 100%; column-gap: 1px; margin: 0 1px; background: #fff; }
    .views { display: grid; grid-template: 1fr 1fr / 1fr 1fr; gap: 3px; min-height: 0; padding-right: 2px; background: linear-gradient(90deg, #fff 90%, var(--edge)); }
    .strip { display: flex; flex-direction: column; align-items: center; gap: 12px; padding-top: 3px; border: 1px solid var(--line); background: var(--sheen); }
    .strip b { writing-mode: vertical-rl; transform: rotate(180deg); color: #222; }
    footer { display: flex; align-items: center; justify-content: space-between; flex: none; height: 22px; margin-top: 2px; padding: 0 3px 0 6px; border: 1px solid var(--line); box-shadow: inset 1px 1px #fff; background: var(--sheen); }
  </style>
  <header>
    <shape-icon name="cube"></shape-icon><span>Shape 3D</span>
    <icon-button kind="frame" name="lock"></icon-button><i class="sep"></i>
    <icon-button kind="frame" name="min"></icon-button>
    <icon-button kind="frame" name="max"></icon-button>
    <icon-button kind="frame red" name="close"></icon-button>
  </header>
  <menu-bar><button>File</button><button>Edit</button><button>Help</button></menu-bar>
  <div class="tools">
    ${icons('tool', 'sphere torus cylinder cone box plane teapot signal | pick move rotate scale | opick omove orot oscale | trot tmove | zoom scene eye')}
  </div>
  <div class="body">
    <div class="views">
      <view-panel view="top" label="Top" active></view-panel>
      <view-panel view="front" label="Front"></view-panel>
      <view-panel view="right" label="Right"></view-panel>
      <view-panel view="shape" label="Shape"></view-panel>
    </div>
    <div class="strip"><icon-button kind="view" name="minus"></icon-button><b>Parameters</b></div>
    <side-panel></side-panel>
  </div>
  <footer><span>Coordinates</span><icon-button kind="view" name="plus"></icon-button></footer>`);

define('app-window', `
  <style>
    :host { display: flex; flex-direction: column; height: 100vh; box-sizing: border-box; padding: 0 4px 3px 7px; background: linear-gradient(#9db5d1, #b9d1ea 32px); }
    .title { display: flex; align-items: center; gap: 2px; flex: none; box-sizing: border-box; height: 32px; padding: 6px 2px 0 0; color: #000; }
    .title h1 { flex: 1; margin: 0; padding-left: 8px; font: 14px/20px "Noto Sans", "Open Sans", sans-serif; white-space: nowrap; }
    .title .mark { padding-left: 6px; font: italic bold 18px/20px "Liberation Sans", sans-serif; color: #fff; text-shadow: 1px 1px 1px #567; }
    menu-bar { flex: none; height: 22px; }
    .bar { display: flex; align-items: center; gap: 18px; flex: none; height: 66px; padding: 0 6px; border: 1px solid var(--line); box-shadow: inset 1px 1px #fff; background: var(--sheen); }
    .logo { box-sizing: border-box; width: 100px; height: 55px; padding-left: 5px; border: 1px solid #7a8a99; background: linear-gradient(100deg, #8ea6e6, #1f3c8a 90%); color: #fff; font: italic 30px/50px "Liberation Serif", serif; white-space: nowrap; margin-right: -4px; }
    .logo span { font-size: 46px; }
    .bar .sep { width: 1px; height: 30px; background: #5f86c4; margin: 0 -3px 0 -4px; }
    .desk { flex: 1; min-height: 0; display: flex; padding: 5px; background: var(--blue); border-top: 1px solid #fff; }
  </style>
  <div class="title">
    <span class="mark">S</span>
    <h1>Shape it - C:\\Users\\Wolfgang\\Documents\\SHAPE\\TUTORIALS\\TUTORIAL_2010_OBJTRANS\\3D_Module_objtrans.shp</h1>
    <icon-button kind="win" name="winMin"></icon-button>
    <icon-button kind="win" name="winMax"></icon-button>
    <icon-button kind="win red" name="winClose"></icon-button>
  </div>
  <menu-bar><button>File</button><button>Options</button><button>Windows</button><button>Help</button></menu-bar>
  <div class="bar">
    <div class="logo"><span>S</span>hape</div><i class="sep"></i>
    ${icons('main', 'open save news | camera cube flask gauge wave runner reel board book')}
  </div>
  <div class="desk"><module-frame></module-frame></div>`);
</script>
</body>
</html>
